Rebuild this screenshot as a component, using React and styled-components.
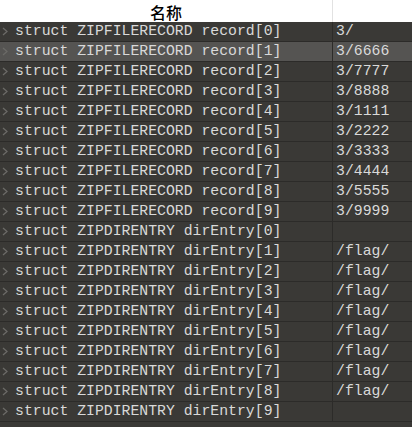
import React from 'react';
import styled, { createGlobalStyle } from 'styled-components';

const GlobalStyle = createGlobalStyle`
  html, body {
    margin: 0;
    padding: 0;
    background: #3a3936;
  }
`;

const records = ['', '6666', '7777', '8888', '1111', '2222', '3333', '4444', '5555', '9999'];

const rows = [
  ...records.map((v, i) => ({ name: `struct ZIPFILERECORD record[${i}]`, value: `3/${v}` })),
  ...Array.from({ length: 10 }, (_, i) => ({
    name: `struct ZIPDIRENTRY dirEntry[${i}]`,
    value: i === 0 || i === 9 ? '' : '/flag/',
  })),
];

const Table = styled.div`
  width: 412px;
  height: 427px;
  overflow: hidden;
  background: #3a3936;
  font-family: "Liberation Mono", "DejaVu Sans Mono", monospace;
`;

const Header = styled.div`
  display: grid;
  grid-template-columns: 333px 1fr;
  height: 22px;
  background: #ffffff;
`;

const HeaderCell = styled.div`
  display: flex;
  align-items: center;
  justify-content: center;
  font-family: "Noto Sans CJK SC", sans-serif;
  font-size: 16px;
  font-weight: 500;
  color: #000;
  border-right: ${p => (p.$divider ? '1px solid #e2e2e2' : 'none')};
`;

const Row = styled.div`
  display: grid;
  grid-template-columns: 333px 1fr;
  height: 19px;
  border-bottom: 1px solid #2c2b29;
  background: ${p => (p.$selected ? '#555452' : '#3a3936')};
  color: #d9d9d9;
  font-size: 14.8px;
  line-height: 19px;
`;

const NameCell = styled.div`
  display: flex;
  align-items: center;
  border-right: 1px solid #2c2b29;
  white-space: pre;
`;

const Chevron = styled.svg`
  width: 15px;
  height: 19px;
  flex: none;
`;

const ValueCell = styled.div`
  padding-left: 3px;
  white-space: pre;
`;

export default function App() {
  return (
    <Table>
      <GlobalStyle />
      <Header>
        <HeaderCell $divider>名称</HeaderCell>
        <HeaderCell />
      </Header>
      {rows.map((r, i) => (
        <Row key={i} $selected={i === 1}>
          <NameCell>
            <Chevron viewBox="0 0 15 19">
              <path d="M3 6 L7 9.5 L3 13" fill="none" stroke="#6b6a67" strokeWidth="1.3" />
            </Chevron>
            {r.name}
          </NameCell>
          <ValueCell>{r.value}</ValueCell>
        </Row>
      ))}
    </Table>
  );
}
